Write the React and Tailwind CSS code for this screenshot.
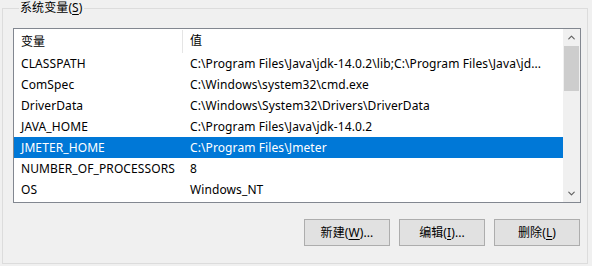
import { ChevronUp, ChevronDown } from "lucide-react";

const rows = [
  ["CLASSPATH", "C:\\Program Files\\Java\\jdk-14.0.2\\lib;C:\\Program Files\\Java\\jd..."],
  ["ComSpec", "C:\\Windows\\system32\\cmd.exe"],
  ["DriverData", "C:\\Windows\\System32\\Drivers\\DriverData"],
  ["JAVA_HOME", "C:\\Program Files\\Java\\jdk-14.0.2"],
  ["JMETER_HOME", "C:\\Program Files\\Jmeter", true],
  ["NUMBER_OF_PROCESSORS", "8"],
  ["OS", "Windows_NT"],
];

const font = "font-['Noto_Sans','Noto_Sans_CJK_SC',sans-serif]";

function Button({ label, hot, suffix }) {
  return (
    <button
      type="button"
      className="flex h-[27px] w-[86px] items-center justify-center border border-[#adadad] bg-[#e1e1e1] text-[12px] text-black"
    >
      {label}(<span className="underline underline-offset-2">{hot}</span>){suffix}
    </button>
  );
}

export default function App() {
  return (
    <div className={`h-[266px] w-[592px] bg-[#f0f0f0] pl-[2px] text-[12px] tracking-[0.1px] text-black ${font}`}>
      <fieldset className="h-[264px] w-[586px] border border-[#dcdcdc] pl-[10px]">
        <legend className="ml-[6px] px-[1px] leading-[16px]">
          系统变量(<span className="underline underline-offset-2">S</span>)
        </legend>
        <div className="mt-[12px] flex h-[175px] w-[568px] border border-[#828790] bg-white">
          <div className="min-w-0 flex-1">
            <div className="flex h-[24px] items-center">
              <div className="w-[169px] border-r border-[#e5e5e5] px-[7px] leading-[23px]">变量</div>
              <div className="px-[7px]">值</div>
            </div>
            {rows.map(([name, value, selected]) => (
              <div
                key={name}
                className={`flex h-[21px] items-center ${selected ? "bg-[#0078d7] text-white" : ""}`}
              >
                <div className="w-[169px] shrink-0 whitespace-nowrap px-[7px]">{name}</div>
                <div className="min-w-0 flex-1 whitespace-nowrap pl-[7px]">{value}</div>
              </div>
            ))}
          </div>
          <div className="flex w-[17px] flex-col bg-[#f0f0f0]">
            <div className="flex h-[17px] items-center justify-center text-[#606060]">
              <ChevronUp size={11} strokeWidth={2.5} />
            </div>
            <div className="mx-[1px] h-[45px] bg-[#cdcdcd]" />
            <div className="flex-1" />
            <div className="flex h-[17px] items-center justify-center text-[#606060]">
              <ChevronDown size={11} strokeWidth={2.5} />
            </div>
          </div>
        </div>
        <div className="mt-[16px] flex w-[568px] justify-end gap-[9px] pr-[1px]">
          <Button label="新建" hot="W" suffix="..." />
          <Button label="编辑" hot="I" suffix="..." />
          <Button label="删除" hot="L" />
        </div>
      </fieldset>
    </div>
  );
}
